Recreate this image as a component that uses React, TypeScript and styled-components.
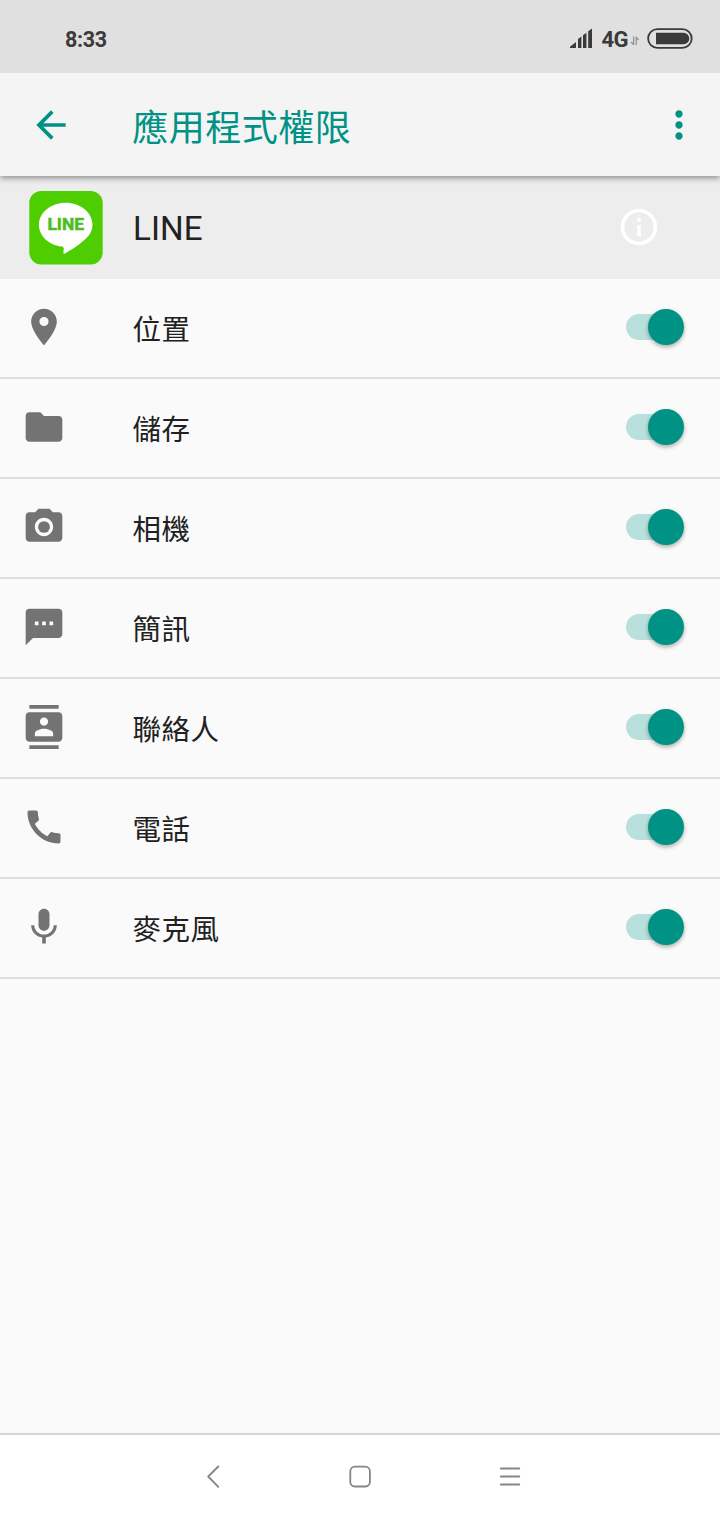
import React from "react";
import styled, { createGlobalStyle } from "styled-components";
import type { IconType } from "react-icons";
import {
  MdArrowBack,
  MdContacts,
  MdFolder,
  MdInfoOutline,
  MdMic,
  MdMoreVert,
  MdPhotoCamera,
  MdPlace,
  MdSms,
  MdCall,
} from "react-icons/md";

const teal = "#009284";

const GlobalStyle = createGlobalStyle`
  * { box-sizing: border-box; }
  body {
    margin: 0;
    background: #fafafa;
    font-family: Roboto, "Noto Sans CJK TC", sans-serif;
    color: #212121;
  }
`;

const Screen = styled.div`
  display: flex;
  flex-direction: column;
  width: 720px;
  height: 1520px;
  background: #fafafa;
  overflow: hidden;
`;

const StatusBar = styled.header`
  position: relative;
  z-index: 2;
  display: flex;
  flex: none;
  align-items: center;
  height: 73px;
  padding: 0 27px 0 65px;
  background: #e0e0e0;
  color: #3a3a3a;
`;

const Clock = styled.span`
  margin-right: auto;
  padding-top: 6px;
  font-size: 21.5px;
  line-height: 26px;
  font-weight: 700;
  letter-spacing: -0.3px;
`;

const StatusIcons = styled.div`
  display: flex;
  align-items: center;
  padding-top: 4px;
`;

const Network = styled.span`
  margin: 3px 2px 0 10px;
  font-size: 22px;
  line-height: 26px;
  font-weight: 700;
  letter-spacing: -0.6px;
`;

const AppBar = styled.div`
  position: relative;
  z-index: 1;
  display: flex;
  flex: none;
  align-items: center;
  height: 103px;
  padding: 0 18.7px 0 29.3px;
  background: #f4f4f4;
  box-shadow: 0 2px 6px rgba(0, 0, 0, 0.42);
`;

const IconButton = styled.button`
  display: flex;
  width: 44px;
  height: 44px;
  padding: 0;
  border: 0;
  background: none;
  color: ${teal};
`;

const Title = styled.h1`
  flex: 1;
  margin: 0 0 0 59px;
  padding-top: 9px;
  font-size: 36px;
  line-height: 50px;
  font-weight: 400;
  letter-spacing: 0.5px;
  color: ${teal};
`;

const AppHeader = styled.section`
  display: flex;
  flex: none;
  align-items: center;
  height: 103px;
  padding: 0 58.7px 0 29.3px;
  background: #ededed;
`;

const AppName = styled.h2`
  flex: 1;
  margin: 2px 0 0 29.8px;
  font-size: 33.2px;
  line-height: 44px;
  font-weight: 400;
`;

const InfoButton = styled(IconButton)`
  margin: -1px 0 0 0;
  color: #fff;
`;

const PermissionList = styled.ul`
  flex: 1;
  margin: 0;
  padding: 0;
  list-style: none;
`;

const PermissionRow = styled.li`
  display: flex;
  align-items: center;
  height: 100px;
  padding: 0 35.5px 2px 22px;
  border-bottom: 2px solid #dedede;
`;

const PermissionIcon = styled.span`
  display: flex;
  width: 110.4px;
  color: #737373;
`;

const PermissionName = styled.span`
  flex: 1;
  padding-top: 2px;
  font-size: 28.5px;
  line-height: 40px;
  letter-spacing: 0.5px;
  font-family: "Noto Sans CJK TC", sans-serif;
`;

const Switch = styled.button<{ $on: boolean }>`
  display: flex;
  flex-direction: ${(p) => (p.$on ? "row" : "row-reverse")};
  align-items: center;
  width: 58.5px;
  height: 37px;
  padding: 0;
  border: 0;
  background: none;
`;

const Track = styled.span<{ $on: boolean }>`
  flex: none;
  width: 48px;
  height: 26px;
  margin: ${(p) => (p.$on ? "0 -26.5px 0 0" : "0 0 0 -26.5px")};
  border-radius: 13px;
  background: ${(p) => (p.$on ? "#b9e0dc" : "#bdbdbd")};
`;

const Thumb = styled.span<{ $on: boolean }>`
  position: relative;
  flex: none;
  width: 36.8px;
  height: 36.8px;
  border-radius: 50%;
  background: ${(p) => (p.$on ? teal : "#fafafa")};
  box-shadow: 0 2px 4px rgba(0, 0, 0, 0.32);
`;

const NavBar = styled.nav`
  display: flex;
  flex: none;
  justify-content: center;
  height: 87px;
  padding-top: 28px;
  gap: 120px;
  border-top: 2px solid #d6d6d6;
  background: #fff;
`;

const NavIcon = styled.svg`
  width: 30px;
  height: 30px;
  fill: none;
  stroke: #858585;
  stroke-width: 1.8;
  stroke-linecap: round;
  stroke-linejoin: round;
`;

const Battery = styled.svg`
  margin-left: 8px;
`;

function SignalIcon() {
  return (
    <svg width="22" height="21" viewBox="0 0 22 21" fill="#3a3a3a">
      <path d="M0 20v-1.300L6 14v6zM8 20V11l3.400-2.400V20zM13 20V7.200l3.400-2.400V20zM18.200 20V3.200L22 .6V20z" />
    </svg>
  );
}

function DataArrows() {
  return (
    <svg width="9" height="12" viewBox="0 0 9 12" fill="none" stroke="#8c8c8c" strokeWidth="1.2">
      <path d="M3.600 3.500v8L.9 9M6.200 12V4.500l2.300 2.200" />
    </svg>
  );
}

function BatteryIcon() {
  return (
    <Battery width="46" height="21" viewBox="0 0 46 21">
      <rect x="1.1" y="1.1" width="43.6" height="18.8" rx="9.4" fill="none" stroke="#3a3a3a" strokeWidth="1.8" />
      <path d="M9 4.7h27.5a5.8 5.8 0 0 1 0 11.6H9z" fill="#3a3a3a" />
    </Battery>
  );
}

function LineLogo() {
  return (
    <svg width="74" height="74" viewBox="0 0 74 74">
      <rect x="0.3" width="73.4" height="73.4" rx="12" fill="#4ecd00" />
      <path
        fill="#fff"
        d="M36.7 11.7C21.9 11.7 9.900 21.6 9.900 33.8c0 11 9.600 20.2 22.600 21.8 2.200.4 2.400 1 2.200 3.200l-.3 2.900c-.1 1 .6 1.500 1.600.9C43.300 58.500 52.300 52.400 57.500 47.100c4.200-4.200 6-8.400 6-13.300 0-12.200-12-22.100-26.800-22.100z"
      />
      <text
        x="18.400"
        y="39.400"
        textLength="36.600"
        lengthAdjust="spacingAndGlyphs"
        fill="#4bbd1c"
        stroke="#4bbd1c"
        strokeWidth="0.5"
        strokeLinejoin="round"
        fontFamily="Roboto, sans-serif"
        fontSize="17.300"
        fontWeight="700"
      >
        LINE
      </text>
    </svg>
  );
}

const permissions: { name: string; Icon: IconType }[] = [
  { name: "位置", Icon: MdPlace },
  { name: "儲存", Icon: MdFolder },
  { name: "相機", Icon: MdPhotoCamera },
  { name: "簡訊", Icon: MdSms },
  { name: "聯絡人", Icon: MdContacts },
  { name: "電話", Icon: MdCall },
  { name: "麥克風", Icon: MdMic },
];

export default function App() {
  const [granted, setGranted] = React.useState(() => permissions.map(() => true));
  const toggle = (index: number) =>
    setGranted((all) => all.map((on, i) => (i === index ? !on : on)));

  return (
    <Screen>
      <GlobalStyle />
      <StatusBar>
        <Clock>8:33</Clock>
        <StatusIcons>
          <SignalIcon />
          <Network>4G</Network>
          <DataArrows />
          <BatteryIcon />
        </StatusIcons>
      </StatusBar>
      <AppBar>
        <IconButton aria-label="返回">
          <MdArrowBack size={44} />
        </IconButton>
        <Title>應用程式權限</Title>
        <IconButton aria-label="更多">
          <MdMoreVert size={44} />
        </IconButton>
      </AppBar>
      <AppHeader>
        <LineLogo />
        <AppName>LINE</AppName>
        <InfoButton aria-label="資訊">
          <MdInfoOutline size={44} />
        </InfoButton>
      </AppHeader>
      <PermissionList>
        {permissions.map(({ name, Icon }, index) => (
          <PermissionRow key={name}>
            <PermissionIcon>
              <Icon size={44} />
            </PermissionIcon>
            <PermissionName>{name}</PermissionName>
            <Switch
              $on={granted[index]}
              role="switch"
              aria-checked={granted[index]}
              aria-label={name}
              onClick={() => toggle(index)}
            >
              <Track $on={granted[index]} />
              <Thumb $on={granted[index]} />
            </Switch>
          </PermissionRow>
        ))}
      </PermissionList>
      <NavBar>
        <NavIcon viewBox="0 0 30 30">
          <path d="M23.3 3.5 13.2 13.5l10.1 10.3" />
        </NavIcon>
        <NavIcon viewBox="0 0 30 30">
          <rect x="5.300" y="3.700" width="19.600" height="19.800" rx="4.500" />
        </NavIcon>
        <NavIcon viewBox="0 0 30 30">
          <path d="M5.8 5.5h18.5M5.8 13.5h18.5M5.8 21.5h18.5" />
        </NavIcon>
      </NavBar>
    </Screen>
  );
}
